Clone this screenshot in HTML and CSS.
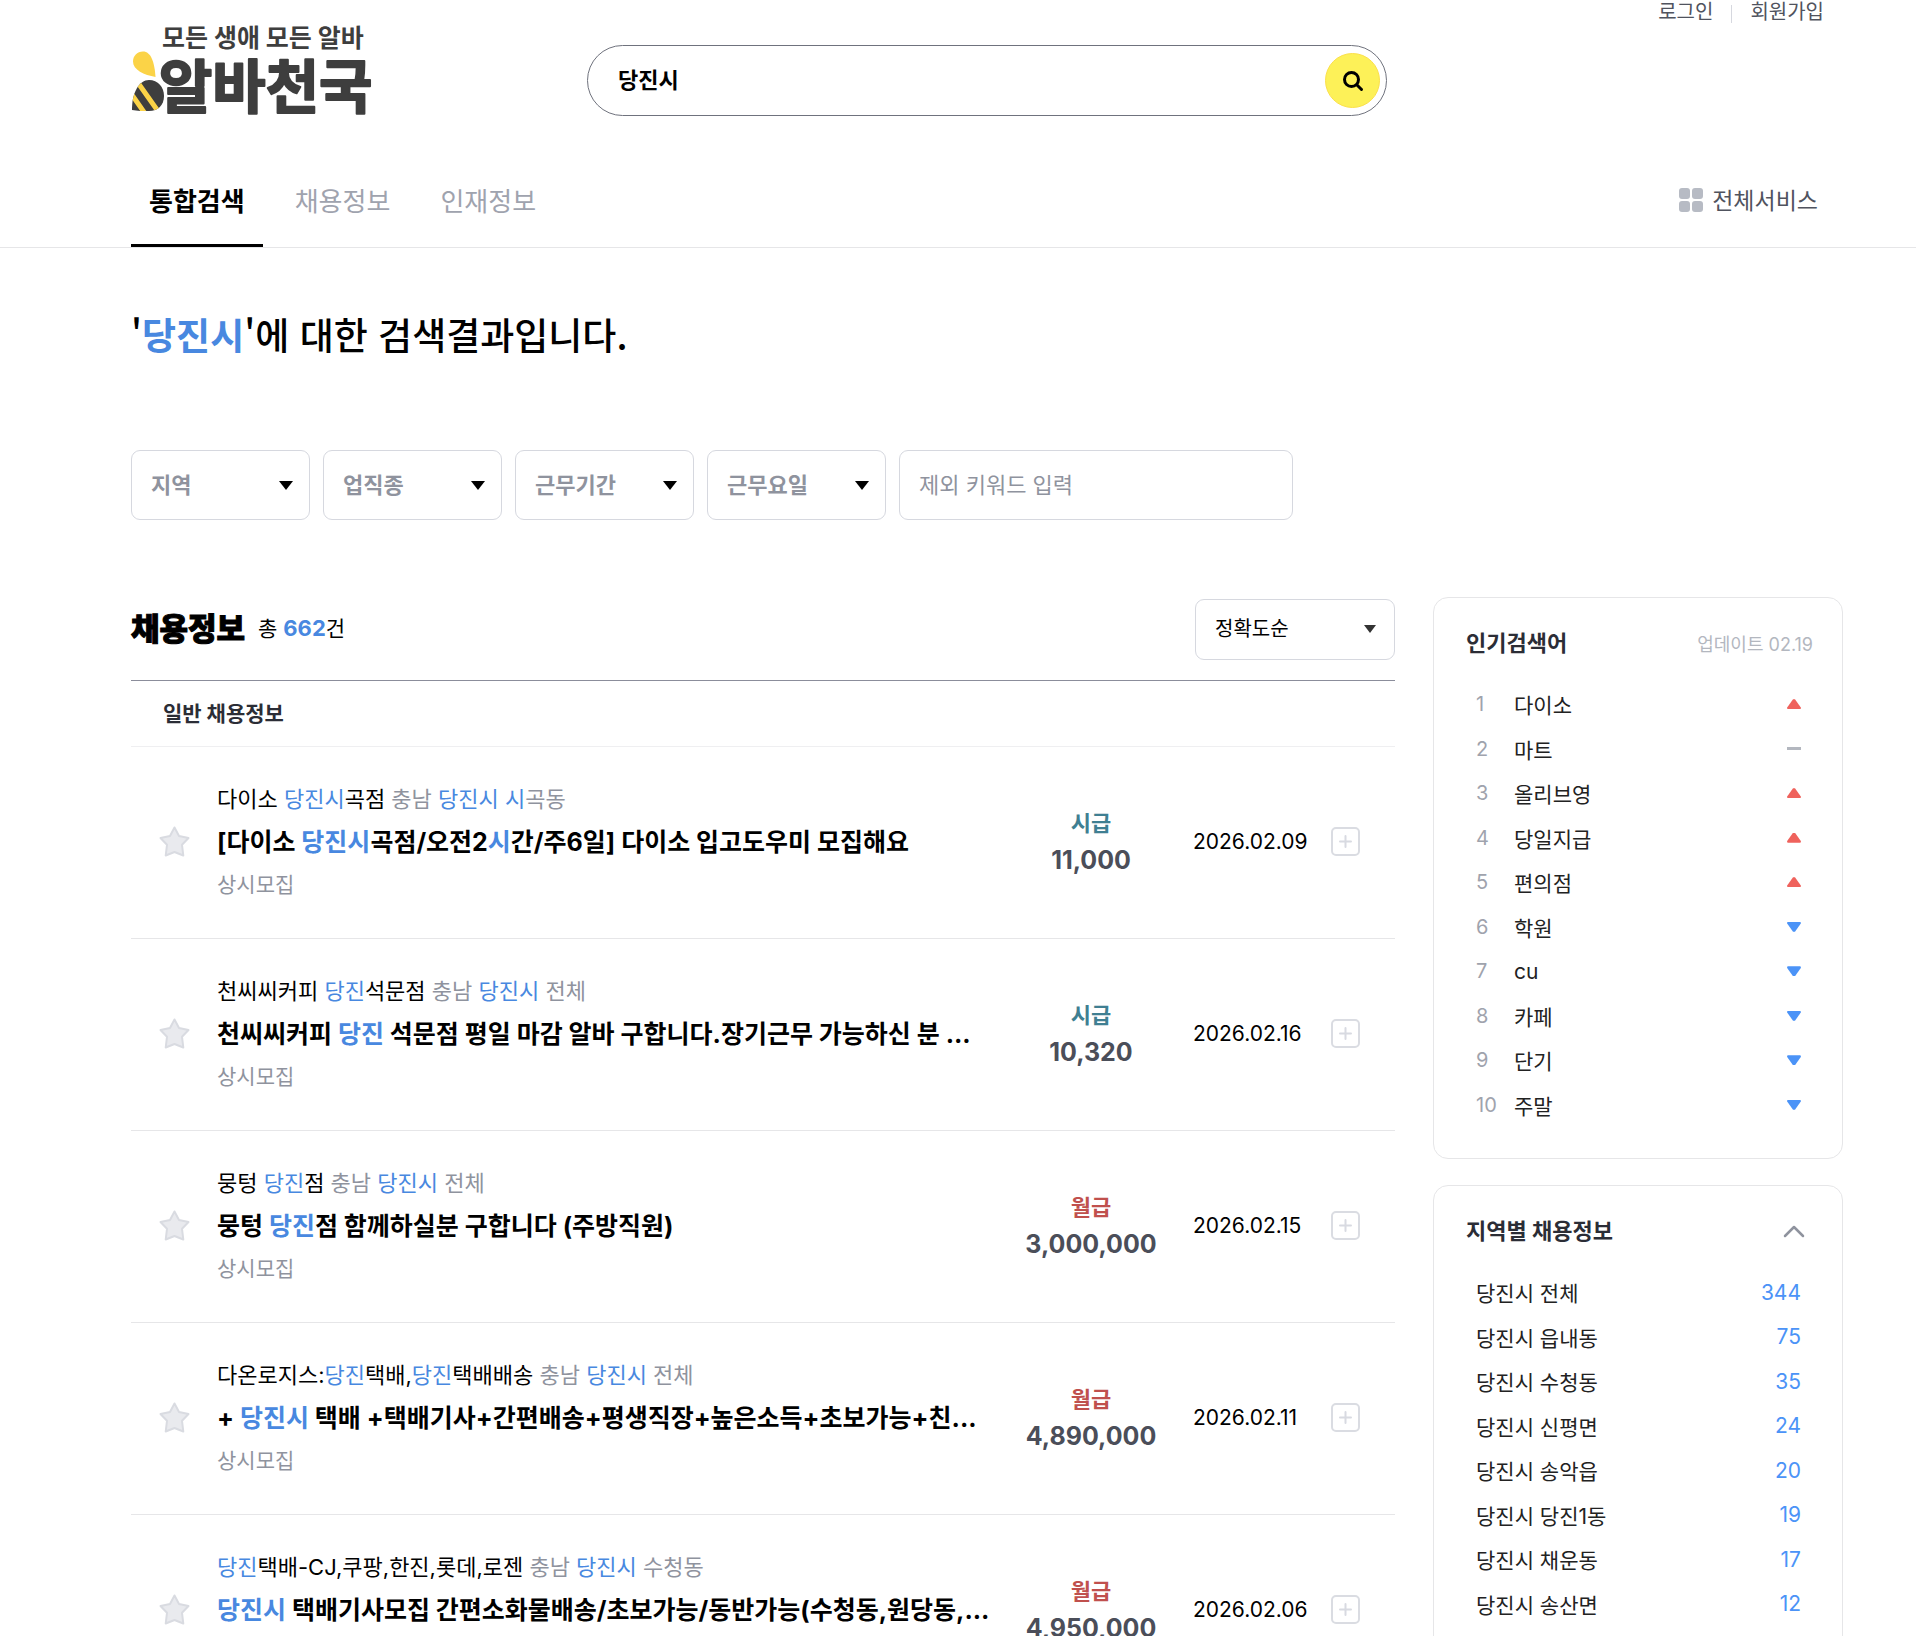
FILE: index.html
```
<!DOCTYPE html>
<html lang="ko">
<head>
    <meta charset="UTF-8">
    <meta name="viewport" content="width=device-width, initial-scale=1.0">
    <title>알바천국 통합검색</title>
    <link rel="stylesheet" href="styles.css">
</head>
<body>
    <header class="header">
        <a href="#" class="logo" aria-label="알바천국">
            <svg width="250" height="102" viewBox="0 0 250 102">
                <path d="M24.500 57C13 55 2 50 2 41.500C2 36 6 31.500 12 31.500C20 31.500 23.500 42 24.500 57Z" fill="#fbd347"/>
                <clipPath id="beeBody">
                    <path d="M1 90C1 82 2 75 6 68C9 63 13 60 18 60C27 60 33 67 33 76C33 85 27 91 18 91C12 91 6 91 1 90Z"/>
                </clipPath>
                <g clip-path="url(#beeBody)">
                    <rect y="58" width="36" height="36" fill="#3e3e3e"/>
                    <path d="M5 60L29 94M-3 69L15 95" stroke="#fbd347" stroke-width="5"/>
                </g>
                <text class="logo-slogan" x="31" y="27">모든 생애 모든 알바</text>
                <text class="logo-name" x="28" y="88">알바천국</text>
            </svg>
        </a>
        <form class="search">
            <input type="text" class="search-input" value="당진시" aria-label="검색어">
            <button type="submit" class="search-btn" aria-label="검색">
                <svg width="24" height="24" viewBox="0 0 24 24" fill="none" stroke="#000" stroke-width="3" stroke-linecap="round">
                    <circle cx="10.500" cy="10.500" r="7"/>
                    <path d="M16 16L20.500 20.500"/>
                </svg>
            </button>
        </form>
        <div class="user-links">
            <a href="#">로그인</a>
            <a href="#">회원가입</a>
        </div>
    </header>

    <nav class="nav">
        <div class="tabs">
            <a href="#" class="tab active">통합검색</a>
            <a href="#" class="tab">채용정보</a>
            <a href="#" class="tab">인재정보</a>
        </div>
        <a href="#" class="all-services">
            <svg width="24" height="24" viewBox="0 0 24 24" fill="#b7bbc4">
                <rect width="11" height="11" rx="3"/>
                <rect x="13" width="11" height="11" rx="3"/>
                <rect y="13" width="11" height="11" rx="3"/>
                <rect x="13" y="13" width="11" height="11" rx="3"/>
            </svg>
            <span>전체서비스</span>
        </a>
    </nav>

    <main class="container">
        <h1 class="page-title">'<em>당진시</em>'에 대한 검색결과입니다.</h1>

        <div class="filters">
            <div class="select-box"><select aria-label="지역"><option>지역</option></select></div>
            <div class="select-box"><select aria-label="업직종"><option>업직종</option></select></div>
            <div class="select-box"><select aria-label="근무기간"><option>근무기간</option></select></div>
            <div class="select-box"><select aria-label="근무요일"><option>근무요일</option></select></div>
            <input type="text" class="exclude-input" placeholder="제외 키워드 입력" aria-label="제외 키워드">
        </div>

        <div class="columns">
            <section class="jobs">
                <div class="jobs-head">
                    <h2>채용정보</h2>
                    <p class="total">총 <strong>662</strong>건</p>
                    <div class="select-box sort"><select aria-label="정렬"><option>정확도순</option></select></div>
                </div>
                <h3 class="jobs-sub">일반 채용정보</h3>
                <ul class="job-list">
                    <li class="job">
                        <button class="star" aria-label="스크랩"><svg width="31" height="31" viewBox="0 0 31 31"><use href="#starShape"/></svg></button>
                        <div class="job-info">
                            <p class="company">다이소 <em>당진시</em>곡점 <span>충남 <em>당진시</em> <em>시</em>곡동</span></p>
                            <a href="#" class="job-title">[다이소 <em>당진시</em>곡점/오전2<em>시</em>간/주6일] 다이소 입고도우미 모집해요</a>
                            <p class="period">상시모집</p>
                        </div>
                        <div class="pay hourly"><span>시급</span><strong>11,000</strong></div>
                        <time class="date">2026.02.09</time>
                        <button class="more" aria-label="더보기"><svg width="13" height="13" viewBox="0 0 13 13"><use href="#plusShape"/></svg></button>
                    </li>
                    <li class="job">
                        <button class="star" aria-label="스크랩"><svg width="31" height="31" viewBox="0 0 31 31"><use href="#starShape"/></svg></button>
                        <div class="job-info">
                            <p class="company">천씨씨커피 <em>당진</em>석문점 <span>충남 <em>당진시</em> 전체</span></p>
                            <a href="#" class="job-title">천씨씨커피 <em>당진</em> 석문점 평일 마감 알바 구합니다.장기근무 가능하신 분 ...</a>
                            <p class="period">상시모집</p>
                        </div>
                        <div class="pay hourly"><span>시급</span><strong>10,320</strong></div>
                        <time class="date">2026.02.16</time>
                        <button class="more" aria-label="더보기"><svg width="13" height="13" viewBox="0 0 13 13"><use href="#plusShape"/></svg></button>
                    </li>
                    <li class="job">
                        <button class="star" aria-label="스크랩"><svg width="31" height="31" viewBox="0 0 31 31"><use href="#starShape"/></svg></button>
                        <div class="job-info">
                            <p class="company">뭉텅 <em>당진</em>점 <span>충남 <em>당진시</em> 전체</span></p>
                            <a href="#" class="job-title">뭉텅 <em>당진</em>점 함께하실분 구합니다 (주방직원)</a>
                            <p class="period">상시모집</p>
                        </div>
                        <div class="pay monthly"><span>월급</span><strong>3,000,000</strong></div>
                        <time class="date">2026.02.15</time>
                        <button class="more" aria-label="더보기"><svg width="13" height="13" viewBox="0 0 13 13"><use href="#plusShape"/></svg></button>
                    </li>
                    <li class="job">
                        <button class="star" aria-label="스크랩"><svg width="31" height="31" viewBox="0 0 31 31"><use href="#starShape"/></svg></button>
                        <div class="job-info">
                            <p class="company">다온로지스:<em>당진</em>택배,<em>당진</em>택배배송 <span>충남 <em>당진시</em> 전체</span></p>
                            <a href="#" class="job-title">+ <em>당진시</em> 택배 +택배기사+간편배송+평생직장+높은소득+초보가능+친...</a>
                            <p class="period">상시모집</p>
                        </div>
                        <div class="pay monthly"><span>월급</span><strong>4,890,000</strong></div>
                        <time class="date">2026.02.11</time>
                        <button class="more" aria-label="더보기"><svg width="13" height="13" viewBox="0 0 13 13"><use href="#plusShape"/></svg></button>
                    </li>
                    <li class="job">
                        <button class="star" aria-label="스크랩"><svg width="31" height="31" viewBox="0 0 31 31"><use href="#starShape"/></svg></button>
                        <div class="job-info">
                            <p class="company"><em>당진</em>택배-CJ,쿠팡,한진,롯데,로젠 <span>충남 <em>당진시</em> 수청동</span></p>
                            <a href="#" class="job-title"><em>당진시</em> 택배기사모집 간편소화물배송/초보가능/동반가능(수청동,원당동,...</a>
                            <p class="period">상시모집</p>
                        </div>
                        <div class="pay monthly"><span>월급</span><strong>4,950,000</strong></div>
                        <time class="date">2026.02.06</time>
                        <button class="more" aria-label="더보기"><svg width="13" height="13" viewBox="0 0 13 13"><use href="#plusShape"/></svg></button>
                    </li>
                </ul>
            </section>

            <aside class="sidebar">
                <section class="card">
                    <div class="card-head">
                        <h2>인기검색어</h2>
                        <span class="updated">업데이트 02.19</span>
                    </div>
                    <ol class="rank-list">
                        <li><span class="rank">1</span><a href="#">다이소</a><i class="up"></i></li>
                        <li><span class="rank">2</span><a href="#">마트</a><i class="same"></i></li>
                        <li><span class="rank">3</span><a href="#">올리브영</a><i class="up"></i></li>
                        <li><span class="rank">4</span><a href="#">당일지급</a><i class="up"></i></li>
                        <li><span class="rank">5</span><a href="#">편의점</a><i class="up"></i></li>
                        <li><span class="rank">6</span><a href="#">학원</a><i class="down"></i></li>
                        <li><span class="rank">7</span><a href="#">cu</a><i class="down"></i></li>
                        <li><span class="rank">8</span><a href="#">카페</a><i class="down"></i></li>
                        <li><span class="rank">9</span><a href="#">단기</a><i class="down"></i></li>
                        <li><span class="rank">10</span><a href="#">주말</a><i class="down"></i></li>
                    </ol>
                </section>

                <section class="card">
                    <div class="card-head">
                        <h2>지역별 채용정보</h2>
                        <button class="fold" aria-label="접기">
                            <svg width="22" height="14" viewBox="0 0 22 14" fill="none" stroke="#8f939e" stroke-width="2.500" stroke-linecap="round" stroke-linejoin="round">
                                <path d="M2 12L11 3L20 12"/>
                            </svg>
                        </button>
                    </div>
                    <ul class="region-list">
                        <li><a href="#">당진시 전체</a><span>344</span></li>
                        <li><a href="#">당진시 읍내동</a><span>75</span></li>
                        <li><a href="#">당진시 수청동</a><span>35</span></li>
                        <li><a href="#">당진시 신평면</a><span>24</span></li>
                        <li><a href="#">당진시 송악읍</a><span>20</span></li>
                        <li><a href="#">당진시 당진1동</a><span>19</span></li>
                        <li><a href="#">당진시 채운동</a><span>17</span></li>
                        <li><a href="#">당진시 송산면</a><span>12</span></li>
                    </ul>
                </section>
            </aside>
        </div>
    </main>

    <!-- shared icon shapes -->
    <svg class="sprite" width="0" height="0">
        <symbol id="starShape" viewBox="0 0 31 31">
            <path d="M15.500 1.500L20 10L29.500 12L23 18.800L24.300 29.500L15.500 26L6.700 29.500L8 18.800L1.500 12L11 10Z" fill="#e9eaee" stroke="#d9dbe1" stroke-width="2" stroke-linejoin="round"/>
        </symbol>
        <symbol id="plusShape" viewBox="0 0 13 13">
            <path d="M6.500 1V12M1 6.500H12" stroke="#d8dae1" stroke-width="2" stroke-linecap="round"/>
        </symbol>
    </svg>
</body>
</html>
```

FILE: styles.css
```
:root {
    --blue: #4888e0;
    --link-blue: #4b93f7;
    --text: #000000;
    --dark: #2b2d36;
    --muted: #8f939e;
    --border: #d6d8df;
    --line: #e6e6e8;
}

* {
    margin: 0;
    padding: 0;
    box-sizing: border-box;
}

body {
    font-family: Inter, "Noto Sans CJK KR", sans-serif;
    background-color: #ffffff;
    color: var(--text);
}

a {
    color: inherit;
    text-decoration: none;
}

ul,
ol {
    list-style: none;
}

em,
i {
    font-style: normal;
}

em {
    color: var(--blue);
}

button {
    background: none;
    border: none;
    cursor: pointer;
}

input,
select {
    font-family: inherit;
    background-color: #ffffff;
    outline: none;
}

.sprite {
    display: block;
}

/* header */
.header {
    display: grid;
    grid-template-columns: 1fr 800px 1fr;
    height: 153px;
    padding: 0 73px 0 131px;
}

.logo {
    padding-top: 20px;
}

.logo-slogan {
    font-size: 25px;
    font-weight: 700;
    fill: #3e3e3e;
}

.logo-name {
    font-size: 58px;
    font-weight: 700;
    fill: #3e3e3e;
    stroke: #3e3e3e;
    stroke-width: 2px;
    stroke-linejoin: round;
}

.search {
    display: flex;
    align-items: center;
    height: 71px;
    margin-top: 45px;
    padding: 0 6px 0 30px;
    border: 1px solid #6f727d;
    border-radius: 36px;
}

.search-input {
    flex: 1;
    padding-bottom: 5px;
    border: none;
    font-size: 22px;
    font-weight: 700;
    color: var(--text);
}

.search-btn {
    display: flex;
    align-items: center;
    justify-content: center;
    width: 55px;
    height: 55px;
    border: 1px solid #fbe04a;
    border-radius: 50%;
    background-color: #fdf158;
}

.user-links {
    display: flex;
    justify-content: flex-end;
    padding-right: 19px;
    font-size: 20px;
    line-height: 24px;
    color: #50535e;
}

.user-links a + a {
    position: relative;
    margin-left: 37px;
}

.user-links a + a::before {
    content: "";
    position: absolute;
    left: -19px;
    top: 5px;
    width: 1px;
    height: 18px;
    background-color: var(--border);
}

/* tabs */
.nav {
    display: flex;
    justify-content: space-between;
    align-items: center;
    padding: 0 98px 0 131px;
    border-bottom: 1px solid var(--line);
}

.tabs {
    display: flex;
    gap: 14px;
}

.tab {
    padding: 4px 18px 0;
    font-size: 26px;
    line-height: 90px;
    color: #9fa3ae;
}

.tab.active {
    font-weight: 700;
    color: var(--text);
    box-shadow: inset 0 -3px 0 #000000;
}

.all-services {
    display: flex;
    align-items: center;
    gap: 9px;
    font-size: 23px;
    color: #50535e;
}

.all-services span {
    padding-bottom: 3px;
}

/* title and filters */
.container {
    padding: 64px 73px 0 131px;
}

.page-title {
    font-family: "Noto Sans CJK KR", sans-serif;
    font-size: 37px;
    font-weight: 500;
    line-height: 44px;
}

.page-title em {
    font-weight: 700;
}

.filters {
    display: flex;
    gap: 13px;
    margin-top: 94px;
}

.select-box {
    position: relative;
    width: 179px;
}

.select-box::after {
    content: "";
    position: absolute;
    right: 17px;
    top: 50%;
    width: 14px;
    height: 9px;
    margin-top: -4px;
    background-color: #000000;
    clip-path: polygon(0 0, 100% 0, 50% 100%);
    pointer-events: none;
}

.select-box select {
    appearance: none;
    display: block;
    width: 100%;
    height: 70px;
    padding: 0 19px;
    border: 1px solid var(--border);
    border-radius: 9px;
    font-size: 22px;
    font-weight: 700;
    color: var(--muted);
}

.exclude-input {
    width: 394px;
    height: 70px;
    padding: 0 19px;
    border: 1px solid var(--border);
    border-radius: 9px;
    font-size: 22px;
}

.exclude-input::placeholder {
    color: var(--muted);
}

.columns {
    display: grid;
    grid-template-columns: 1fr 410px;
    gap: 38px;
    align-items: start;
    margin-top: 77px;
}

/* job list */
.jobs {
    min-width: 0;
}

.jobs-head {
    display: flex;
    align-items: center;
    height: 84px;
    padding-bottom: 19px;
    border-bottom: 1px solid #8b8d9b;
}

.jobs-head h2 {
    padding-bottom: 6px;
    font-size: 31px;
    font-weight: 900;
    -webkit-text-stroke: 1px #000000;
}

.total {
    padding-bottom: 4px;
    margin-left: 13px;
    font-size: 21px;
}

.total strong {
    font-size: 22px;
    font-weight: 700;
    color: var(--blue);
}

.select-box.sort {
    width: 200px;
    margin-left: auto;
}

.select-box.sort select {
    height: 61px;
    font-size: 20px;
    font-weight: 400;
    color: var(--text);
}

.select-box.sort::after {
    width: 12px;
    height: 8px;
    right: 19px;
    background-color: #333333;
}

.jobs-sub {
    padding-left: 32px;
    border-bottom: 1px solid #efeff1;
    font-size: 21px;
    font-weight: 700;
    line-height: 65px;
    color: var(--dark);
}

.job {
    display: grid;
    grid-template-columns: 86px 1fr 160px 160px 29px;
    align-items: center;
    height: 192px;
    padding: 0 35px 2px 0;
    border-bottom: 1px solid var(--line);
}

.star {
    display: flex;
    padding-left: 28px;
}

.job-info {
    min-width: 0;
}

.company {
    font-size: 22px;
    line-height: 42px;
}

.company span {
    color: var(--muted);
}

.job-title {
    display: block;
    overflow: hidden;
    font-size: 25px;
    font-weight: 700;
    line-height: 44px;
    white-space: nowrap;
    text-overflow: ellipsis;
}

.period {
    font-size: 21px;
    line-height: 42px;
    color: var(--muted);
}

.pay {
    display: flex;
    flex-direction: column;
    align-items: center;
    line-height: 37px;
}

.pay span {
    font-size: 22px;
    font-weight: 700;
}

.pay strong {
    font-size: 25px;
    font-weight: 700;
    color: #4b4e59;
}

.pay.hourly span {
    color: #3f7f92;
}

.pay.monthly span {
    color: #c0504d;
}

.date {
    padding-left: 22px;
    font-size: 21px;
}

.more {
    display: flex;
    align-items: center;
    justify-content: center;
    width: 29px;
    height: 29px;
    border: 2px solid #dadce2;
    border-radius: 5px;
}

/* sidebar */
.sidebar {
    display: flex;
    flex-direction: column;
    gap: 26px;
}

.card {
    padding: 29px 29px 31px 32px;
    border: 1px solid var(--line);
    border-radius: 15px;
}

.card-head {
    display: flex;
    justify-content: space-between;
    align-items: center;
    margin-bottom: 23px;
}

.card-head h2 {
    font-size: 22px;
    font-weight: 700;
    line-height: 32px;
    color: var(--dark);
}

.updated {
    font-size: 18px;
    color: #b3b7bf;
}

.fold {
    display: flex;
    margin-right: 8px;
}

.rank-list,
.region-list {
    display: grid;
    grid-auto-rows: 1fr;
    padding: 0 12px 0 10px;
    font-size: 21px;
    color: #222222;
}

.rank-list {
    height: 445px;
}

.region-list {
    height: 356px;
}

.rank-list li,
.region-list li {
    display: flex;
    align-items: center;
}

.rank {
    width: 38px;
    font-size: 20px;
    color: #9fa3ad;
}

.rank-list i {
    width: 14px;
    height: 10px;
    margin-left: auto;
}

.up {
    background-color: #ef625c;
    clip-path: polygon(43% 0, 57% 0, 100% 85%, 96% 100%, 4% 100%, 0 85%);
}

.down {
    background-color: #4b93f7;
    clip-path: polygon(4% 0, 96% 0, 100% 15%, 57% 100%, 43% 100%, 0 15%);
}

.rank-list .same {
    height: 3px;
    background-color: #b3b7bf;
}

.region-list span {
    margin-left: auto;
    color: var(--link-blue);
}
```
